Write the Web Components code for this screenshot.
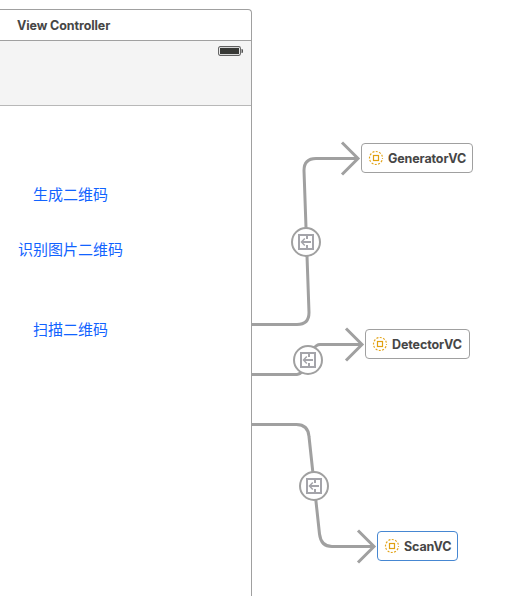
<!DOCTYPE html>
<html lang="zh-CN">
<head>
<meta charset="utf-8">
<title>Storyboard</title>
<style>
body{margin:0;background:#fff;font-family:Inter,"Noto Sans CJK SC",sans-serif;overflow:hidden}
</style>
</head>
<body>
<story-board></story-board>
<script>
function define(name, markup, setup){
  const t=document.createElement('template');
  t.innerHTML=markup;
  customElements.define(name,class extends HTMLElement{
    constructor(){super();this.attachShadow({mode:'open'}).append(t.content.cloneNode(true));}
    connectedCallback(){if(setup)setup(this);}
  });
}
function place(el){
  el.style.left=el.getAttribute('x')+'px';
  el.style.top=el.getAttribute('y')+'px';
}

define('battery-icon',`<style>:host{display:block;width:25px;height:10px}svg{display:block}</style>
<svg width="25" height="10"><rect x=".6" y=".6" width="21.8" height="8.8" rx="1.6" fill="#fff" stroke="#606060" stroke-width="1.1"/><rect x="2" y="2" width="19" height="6" fill="#383936"/><path d="M23.5 3h.8l.7.7v2.6l-.7.7h-.8z" fill="#555"/></svg>`);

define('link-button',`<style>:host{display:block;text-align:center;color:#1163ff;font:15px/20px "Noto Sans CJK SC",sans-serif;white-space:nowrap}</style><slot></slot>`);

define('view-scene',`<style>
:host{display:flex;flex-direction:column;box-sizing:border-box;width:252px;height:587px;border:1px solid #a0a0a0;border-width:1px 1px 0 0;border-top-right-radius:4px;background:#fff}
header{box-sizing:border-box;height:31px;border-bottom:1px solid #a0a0a0;padding-left:17px;font-size:12.5px;line-height:31px;font-weight:700;letter-spacing:-.1px;color:#464646}
.bar{box-sizing:border-box;height:65px;background:#f4f4f4;border-bottom:1px solid #b8b8b8;display:flex;justify-content:flex-end;padding:5px 8px 0 0}
.body{display:flex;flex-direction:column;width:141px;padding-top:78px}
.body ::slotted(:nth-of-type(2)){margin-top:35px}
.body ::slotted(:nth-of-type(3)){margin-top:60px}
</style><header><slot name="title"></slot></header><div class="bar"><battery-icon></battery-icon></div><div class="body"><slot></slot></div>`);

define('controller-node',`<style>
:host{position:absolute;display:flex;align-items:center;box-sizing:border-box;height:30px;border:1px solid #a0a0a0;border-radius:4px;background:#fff;padding-left:6px;gap:4px;color:#464646;font-size:12.5px;font-weight:700;letter-spacing:-.12px;line-height:28px;white-space:nowrap}
:host([selected]){border-color:#4687d2}
svg{flex:none}
span{padding-top:1px}
</style><svg width="16" height="16"><circle cx="8" cy="8" r="6.5" fill="none" stroke="#e3a51c" stroke-width="1.2" stroke-dasharray="2 1.4" stroke-dashoffset="1"/><rect x="5.5" y="5.5" width="5" height="5" fill="none" stroke="#e0a010" stroke-width="1.2"/></svg><span><slot></slot></span>`,
el=>{place(el);el.style.width=el.getAttribute('w')+'px';});

define('segue-badge',`<style>:host{position:absolute;width:30px;height:30px}svg{display:block}</style>
<svg width="30" height="30" fill="none" stroke="#a0a0a0"><circle cx="15" cy="15" r="14" fill="#fff" stroke-width="2"/><rect x="8" y="8" width="14" height="14" stroke="#a4a4aa" stroke-width="2"/><path d="M16 8v4M16 18v4M11 15h9" stroke="#a4a4aa" stroke-width="2"/><path d="M13.8 11.5L10.5 15l3.3 3.5" stroke="#a4a4aa" stroke-width="1.5"/></svg>`,place);

define('segue-lines',`<style>:host{position:absolute;left:0;top:0;width:526px;height:596px}svg{display:block}</style>
<svg width="526" height="596" fill="none" stroke="#a0a0a0" stroke-width="3">
<path d="M252 324.5H297Q309 324.5 309 312.5L304 170.5Q304 158.500 316 158.500H357M342 142.500L358 158.500L342 174.500"/>
<path d="M252 374.500H297C307 374.500 309 344.500 320 344.500H361M346 328.500L362 344.500L346 360.500"/>
<path d="M252 424.500H296.500Q308 424.500 309 436.500L319.500 534Q321 546.500 332 546.500H373M358 530.500L374 546.500L358 562.500"/>
</svg>`);

define('story-board',`<style>
:host{display:block;position:relative;box-sizing:border-box;width:526px;height:596px;padding-top:9px;background:#fff;overflow:hidden}
</style>
<view-scene><span slot="title">View Controller</span>
<link-button>生成二维码</link-button><link-button>识别图片二维码</link-button><link-button>扫描二维码</link-button></view-scene>
<segue-lines></segue-lines>
<segue-badge x="291" y="227"></segue-badge><segue-badge x="293" y="345"></segue-badge><segue-badge x="299" y="471"></segue-badge>
<controller-node x="361" y="143" w="112">GeneratorVC</controller-node>
<controller-node x="365" y="329" w="105">DetectorVC</controller-node>
<controller-node x="377" y="531" w="81" selected>ScanVC</controller-node>`);
</script>
</body>
</html>
